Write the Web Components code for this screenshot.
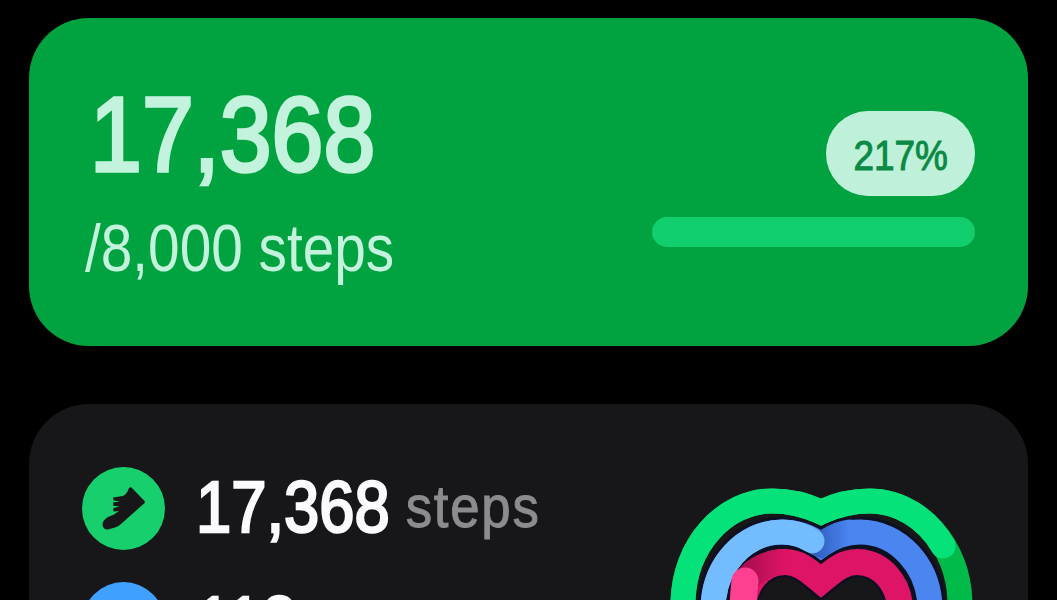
<!doctype html>
<html>
<head>
<meta charset="utf-8">
<style>
  body { margin: 0; background: #000; height: 600px; overflow: hidden; }
</style>
</head>
<body>
<step-goal-card value="17,368" goal="/8,000 steps" percent="217%"></step-goal-card>
<activity-card>
  <activity-row color="#17cf6c" value="17,368" unit="steps">
    <svg viewBox="0 0 83 83" width="83" height="83"><path fill="#17171a" d="M49 20L62.500 34Q63.500 36 61.500 37L39 57Q36.500 59.500 33 60.500L26 62.500Q21.500 63 20.500 58Q20.500 53 26 50L32 47.500L37 44L31.500 44.500L31 41.500L37.500 39L31.500 39L31 35.500L38 34.500L31.500 33.500L31 30.500L41 29Q45 27 47 21Z"/></svg>
  </activity-row>
  <activity-row color="#40a0ff" value="113" unit=""></activity-row>
  <ring-heart slot="chart"></ring-heart>
</activity-card>

<script>
const FONT = `"Liberation Sans", sans-serif`;

class StepGoalCard extends HTMLElement {
  constructor() {
    super();
    this.attachShadow({ mode: 'open' });
    this.shadowRoot.innerHTML = `
      <style>
        :host {
          display: flex;
          box-sizing: border-box;
          justify-content: space-between;
          margin: 18px 29px 0;
          width: 999px;
          height: 328px;
          padding: 54px 53px 0 56px;
          background: #00a33f;
          border-radius: 60px;
          font-family: ${FONT};
          color: #c3f2dd;
        }
        #value {
          font-size: 106px; line-height: 116px;
          -webkit-text-stroke: 3.500px #c3f2dd;
          margin: 4px 0 0 5px;
          transform: scaleX(.88); transform-origin: left;
        }
        #goal {
          font-size: 66px; line-height: 66px; margin-top: 23px; white-space: nowrap;
          transform: scaleX(.86); transform-origin: left;
        }
        #side { display: flex; flex-direction: column; align-items: flex-end; padding-top: 39px; gap: 21px; }
        #pill {
          width: 149px; height: 85px; border-radius: 42px;
          background: #bff0da; color: #0a8a44;
          display: flex; align-items: center; justify-content: center;
        }
        #pill span { font-size: 42px; padding-top: 5px; -webkit-text-stroke: 1px #0a8a44; transform: scaleX(.88); }
        #bar { width: 323px; height: 30px; border-radius: 15px; background: #10cf6c; }
      </style>
      <div>
        <div id="value"></div>
        <div id="goal"></div>
      </div>
      <div id="side">
        <div id="pill"><span></span></div>
        <div id="bar"></div>
      </div>`;
  }
  connectedCallback() {
    this.shadowRoot.getElementById('value').textContent = this.getAttribute('value');
    this.shadowRoot.getElementById('goal').textContent = this.getAttribute('goal');
    this.shadowRoot.querySelector('#pill span').textContent = this.getAttribute('percent');
  }
}

class ActivityCard extends HTMLElement {
  constructor() {
    super();
    this.attachShadow({ mode: 'open' });
    this.shadowRoot.innerHTML = `
      <style>
        :host {
          display: flex;
          box-sizing: border-box;
          justify-content: space-between;
          margin: 58px 29px 0;
          width: 999px;
          height: 400px;
          padding: 63px 0 0 53px;
          background: #17171a;
          border-radius: 60px;
          font-family: ${FONT};
        }
        #rows { display: flex; flex-direction: column; gap: 32px; }
        #chart { padding: 13px 43px 0 0; }
      </style>
      <div id="rows"><slot></slot></div>
      <div id="chart"><slot name="chart"></slot></div>`;
  }
}

class ActivityRow extends HTMLElement {
  constructor() {
    super();
    this.attachShadow({ mode: 'open' });
    this.shadowRoot.innerHTML = `
      <style>
        :host { display: flex; align-items: center; gap: 31px; height: 83px; }
        #icon {
          width: 83px; height: 83px; border-radius: 50%;
          display: flex; flex: none;
        }
        #text {
          line-height: 83px; white-space: nowrap; padding-top: 16px;
          transform: scaleX(.88); transform-origin: left;
        }
        #value { font-size: 72px; color: #fbfaff; -webkit-text-stroke: 2.500px #fbfaff; }
        #unit {
          font-size: 60px; color: #8b8b90; margin-left: 18px; letter-spacing: 2px;
          -webkit-text-stroke: 1px #8b8b90; vertical-align: 5px;
        }
      </style>
      <div id="icon"><slot></slot></div>
      <div id="text"><span id="value"></span><span id="unit"></span></div>`;
  }
  connectedCallback() {
    this.shadowRoot.getElementById('icon').style.background = this.getAttribute('color');
    this.shadowRoot.getElementById('value').textContent = this.getAttribute('value');
    this.shadowRoot.getElementById('unit').textContent = this.getAttribute('unit');
  }
}

class RingHeart extends HTMLElement {
  constructor() {
    super();
    this.attachShadow({ mode: 'open' });
    const track = (d, width, color) => `<path d="${d}" stroke="${color}" stroke-width="${width}"/>`;
    const green = 'M683 640V605C683 545 725 501 772 501C792 501 806 505 821 512C836 505 850 501 870 501C917 501 960 545 960 605V640';
    const blue = 'M713 640V610C713 565 745 532 782 532C798 532 810 537 821 545C832 537 844 532 860 532C897 532 930 565 930 610V640';
    const pink = 'M743 640V610C743 585 760 562 785 562C800 562 810 572 821 581C832 572 842 562 857 562C882 562 900 585 900 610V640';
    this.shadowRoot.innerHTML = `
      <style>
        :host { display: block; width: 320px; height: 120px; }
        svg { display: block; }
        path { fill: none; }
        .cap { stroke-linecap: round; }
      </style>
      <svg width="320" height="120" viewBox="665 480 320 120">
        <defs>
          <linearGradient id="blueShade" gradientUnits="userSpaceOnUse" x1="815" y1="0" x2="850" y2="0">
            <stop offset="0" stop-color="#2f5fc0"/><stop offset="1" stop-color="#4b85f0"/>
          </linearGradient>
          <linearGradient id="pinkShade" gradientUnits="userSpaceOnUse" x1="750" y1="0" x2="785" y2="0">
            <stop offset="0" stop-color="#b00e52"/><stop offset="1" stop-color="#de1466"/>
          </linearGradient>
        </defs>
        ${track(green, 25, '#00bb4a')}
        <path class="cap" d="M683 640V605C683 545 725 501 772 501C792 501 806 505 821 512C836 505 850 501 870 501C899 501 927 518 943 546" stroke="#05e27a" stroke-width="25"/>
        ${track(blue, 31, '#0d1020')}
        ${track(blue, 25, '#4b85f0')}
        <path d="M812 541C815 543 818 544 821 545C832 537 844 532 852 532" stroke="url(#blueShade)" stroke-width="25"/>
        <path class="cap" d="M713 640V610C713 565 745 532 782 532C796 532 805 536 812 541" stroke="#72bcff" stroke-width="25"/>
        ${track(pink, 31, '#0d1020')}
        ${track(pink, 26, '#de1466')}
        <path d="M747 580C754 570 768 562 785 562" stroke="url(#pinkShade)" stroke-width="26"/>
        <path class="cap" d="M743 640V610C743 600 744 590 745 581" stroke="#ff3f90" stroke-width="27"/>
      </svg>`;
  }
}

customElements.define('step-goal-card', StepGoalCard);
customElements.define('activity-card', ActivityCard);
customElements.define('activity-row', ActivityRow);
customElements.define('ring-heart', RingHeart);
</script>
</body>
</html>
